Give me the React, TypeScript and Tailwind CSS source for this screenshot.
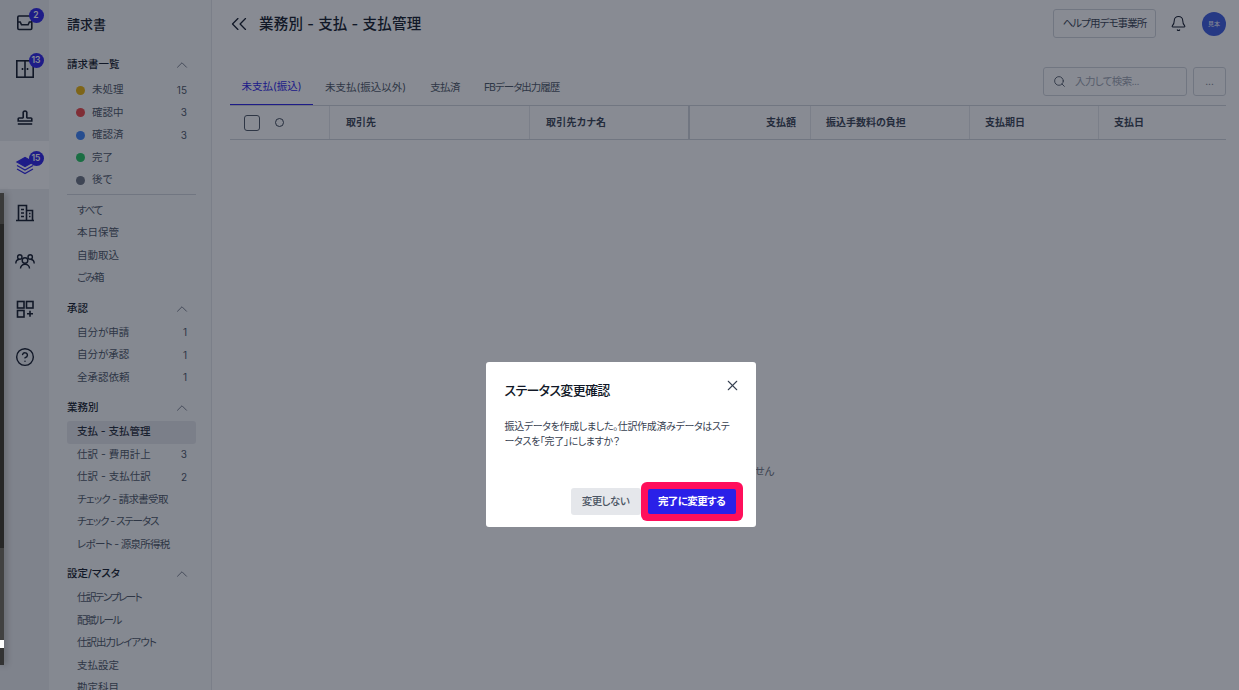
import { Bell, ChevronUp, ChevronsLeft, CircleHelp, Search, X } from "lucide-react";
import type { ReactNode } from "react";

const font = "font-['Inter','Noto_Sans_CJK_JP',sans-serif] [font-feature-settings:'palt']";

type Row = { label: string; count?: number; dot?: string; active?: boolean; tight?: string };

const sections: { title?: string; divider?: boolean; rows: Row[] }[] = [
  {
    title: "請求書一覧",
    rows: [
      { label: "未処理", count: 15, dot: "bg-[#eab308]" },
      { label: "確認中", count: 3, dot: "bg-[#ef4444]" },
      { label: "確認済", count: 3, dot: "bg-[#3b82f6]" },
      { label: "完了", dot: "bg-[#22c55e]" },
      { label: "後で", dot: "bg-[#6b7280]" },
    ],
  },
  {
    divider: true,
    rows: [
      { label: "すべて", tight: "tracking-[-1.2px]" },
      { label: "本日保管" },
      { label: "自動取込" },
      { label: "ごみ箱", tight: "tracking-[-1.2px]" },
    ],
  },
  {
    title: "承認",
    rows: [
      { label: "自分が申請", count: 1 },
      { label: "自分が承認", count: 1 },
      { label: "全承認依頼", count: 1 },
    ],
  },
  {
    title: "業務別",
    rows: [
      { label: "支払 - 支払管理", active: true },
      { label: "仕訳 - 費用計上", count: 3 },
      { label: "仕訳 - 支払仕訳", count: 2 },
      { label: "チェック - 請求書受取", tight: "tracking-[-0.7px]" },
      { label: "チェック - ステータス", tight: "tracking-[-1.1px]" },
      { label: "レポート - 源泉所得税", tight: "tracking-[-0.7px]" },
    ],
  },
  {
    title: "設定/マスタ",
    rows: [
      { label: "仕訳テンプレート", tight: "tracking-[-1.6px]" },
      { label: "配賦ルール", tight: "tracking-[-1.4px]" },
      { label: "仕訳出力レイアウト", tight: "tracking-[-1px]" },
      { label: "支払設定" },
      { label: "勘定科目" },
    ],
  },
];

function Badge({ n, top = "top-[-5px]" }: { n: number; top?: string }) {
  return (
    <span className={`absolute left-[14px] flex h-[15px] w-[15px] items-center justify-center rounded-full bg-[#2a20e8] text-[8.5px] font-semibold text-white ${top}`}>
      {n}
    </span>
  );
}

function RailItem({ children, badge, badgeTop, active, h = "h-12" }: { children: ReactNode; badge?: number; badgeTop?: string; active?: boolean; h?: string }) {
  return (
    <div className={`flex w-full items-center justify-center ${h} ${active ? "bg-white" : ""}`}>
      <div className="relative h-[20px] w-[20px] text-[#111827]">
        {children}
        {badge ? <Badge n={badge} top={badgeTop} /> : null}
      </div>
    </div>
  );
}

const iconProps = { viewBox: "0 0 20 20", fill: "none", stroke: "currentColor", strokeWidth: 1.6, className: "h-5 w-5" };

function Rail() {
  return (
    <div className="flex h-full w-[49px] shrink-0 flex-col bg-[#eceef1]">
      <RailItem badge={2} h="h-[45px]">
        <svg {...iconProps}>
          <rect x="2.800" y="3" width="14" height="13.500" rx="1.200" />
          <path d="M2.800 9h2.400l1.300 2.800h6.600L14.400 9h2.400" />
        </svg>
      </RailItem>
      <RailItem badge={13} badgeTop="top-[-6px]">
        <svg {...iconProps}>
          <rect x="1.800" y="1.800" width="16.400" height="16.400" />
          <path d="M10 1.800v16.400" />
          <path d="M7.500 9v2M12.500 9v2" />
        </svg>
      </RailItem>
      <RailItem>
        <svg {...iconProps}>
          <path d="M8.200 10.500V6.500a1.900 1.900 0 1 1 3.600 0v4l.5.500H16a.8.800 0 0 1 .8.800V14H3.200v-2.200A.8.800 0 0 1 4 11h3.700z" />
          <path d="M2.800 17h14.400" />
        </svg>
      </RailItem>
      <RailItem badge={15} badgeTop="top-[-4px]" active>
        <svg viewBox="0 0 20 20" fill="none" stroke="#2a20e8" strokeWidth={1.300} className="h-5 w-5">
          <path d="M10 2.500 2 7l8 4.500L18 7z" fill="#2a20e8" />
          <path d="M2 10.500 10 15l8-4.500M2 14l8 4.500 8-4.500" />
        </svg>
      </RailItem>
      <RailItem>
        <svg {...iconProps}>
          <path d="M3.500 17.500V2.500h8v15M11.500 7.500h6v10M1 17.500h18" />
          <path d="M6 6.500h3M6 10h3M6 13.500h3M14 10.500h1.500M14 13.500h1.500" />
        </svg>
      </RailItem>
      <RailItem>
        <svg {...iconProps} strokeWidth={1.400}>
          <circle cx="10" cy="9.500" r="2.800" />
          <path d="M5.500 17.500c0-2.500 2-4.300 4.500-4.300s4.500 1.800 4.500 4.300" />
          <circle cx="4.800" cy="6" r="2.200" />
          <circle cx="15.200" cy="6" r="2.200" />
          <path d="M.8 12.500c0-2.300 1.500-4 3.500-4.300M19.200 12.500c0-2.300-1.500-4-3.500-4.300" />
        </svg>
      </RailItem>
      <RailItem>
        <svg {...iconProps}>
          <rect x="2.500" y="2.500" width="6.500" height="6.500" />
          <rect x="11.500" y="2.500" width="6.500" height="6.500" />
          <rect x="2.500" y="11.500" width="6.500" height="6.500" />
          <path d="M15 11.800v6M12 14.800h6" />
        </svg>
      </RailItem>
      <RailItem>
        <CircleHelp size={20} strokeWidth={1.700} />
      </RailItem>
    </div>
  );
}

function SideRow({ row }: { row: Row }) {
  return (
    <div
      className={`flex h-[22.5px] items-center justify-between rounded-[3px] pl-[10px] pr-[9px] text-[10.5px] ${
        row.active ? "bg-[#e5e7eb] font-medium text-[#1f2937]" : "text-[#4b5563]"
      }`}
    >
      <span className={`flex items-center gap-[7px] ${row.tight ?? ""}`}>
        {row.dot ? <span className={`ml-[-1px] h-[9px] w-[9px] rounded-full ${row.dot}`} /> : null}
        {row.label}
      </span>
      {row.count ? <span className="text-[10px]">{row.count}</span> : null}
    </div>
  );
}

function sectionGap(i: number, divider?: boolean) {
  if (divider) return "mt-[2px] border-t border-[#d1d5db] pt-[5px]";
  if (i === 0) return "";
  return i === sections.length - 1 ? "mt-[7px]" : "mt-[8px]";
}

function SubNav() {
  return (
    <div className="flex h-full w-[163px] shrink-0 flex-col overflow-hidden border-r border-[#e5e7eb] bg-[#f9fafb] pl-[18px] pr-[15px]">
      <div className="pt-[15px] text-[13px] font-medium leading-[18px] text-[#111827]">請求書</div>
      <div className="mt-[21px] flex flex-col">
        {sections.map((s, i) => (
          <div key={i} className={sectionGap(i, s.divider)}>
            {s.title ? (
              <div className="flex h-[22px] items-center justify-between pr-[5px] text-[10.5px] font-medium text-[#111827]">
                {s.title}
                <ChevronUp size={18} strokeWidth={1.200} className="text-[#6b7280]" />
              </div>
            ) : null}
            <div className={s.title ? (i === 0 ? "mt-[3px]" : "mt-[2px]") : ""}>
              {s.rows.map((r) => (
                <SideRow key={r.label} row={r} />
              ))}
            </div>
          </div>
        ))}
      </div>
    </div>
  );
}

function Main() {
  return (
    <div className="flex min-w-0 flex-1 flex-col pl-[18px] pr-[13px]">
      <div className="flex h-[47px] items-center justify-between">
        <div className="flex items-center gap-[7px] text-[14.5px] font-medium tracking-[0.2px] text-[#111827]">
          <ChevronsLeft size={26} strokeWidth={1.200} className="ml-[-4px]" />
          <span>業務別 - 支払 - 支払管理</span>
        </div>
        <div className="flex items-center">
          <div className="flex h-[29px] w-[103px] items-center justify-center rounded-[3px] border border-[#d1d5db] text-[10.5px] tracking-[-0.9px] text-[#374151]">
            ヘルプ用デモ事業所
          </div>
          <Bell size={17} strokeWidth={1.500} className="ml-[14px] text-[#111827]" />
          <div className="ml-[15px] flex h-6 w-6 items-center justify-center rounded-full bg-[#3a5ae0] text-[6px] text-white">
            見本
          </div>
        </div>
      </div>
      <div className="mt-[20px] flex h-[38px] items-end justify-between">
        <div className="flex text-[10.5px] text-[#4b5563]">
          <div className="flex h-[38px] w-[83px] items-center justify-center border-b border-[#2a20e8] pt-[3px] text-[#2a20e8]">未支払(振込)</div>
          <div className="flex h-[38px] items-center pl-[12px] pr-[24px] pt-[3px]">未支払(振込以外)</div>
          <div className="flex h-[38px] items-center pr-[24px] pt-[3px] tracking-[-0.6px]">支払済</div>
          <div className="flex h-[38px] items-center pt-[3px] tracking-[-1px]">FBデータ出力履歴</div>
        </div>
        <div className="mb-[9px] flex gap-[6px]">
          <div className="flex h-[29px] w-[144px] items-center gap-[9px] rounded-[3px] border border-[#d1d5db] px-[9px] text-[10.5px] tracking-[-0.6px] text-[#9ca3af]">
            <Search size={13} strokeWidth={1.500} className="text-[#374151]" />
            入力して検索...
          </div>
          <div className="flex h-[29px] w-[33px] items-center justify-center rounded-[3px] border border-[#d1d5db] text-[10px] text-[#6b7280]">...</div>
        </div>
      </div>
      <div className="flex h-[35px] items-stretch border-y border-[#d1d5db] text-[10px] font-semibold text-[#374151]">
        <div className="flex w-[100px] items-center gap-[15px] border-r border-[#e5e7eb] pl-[14px]">
          <span className="h-4 w-4 rounded-[3px] border border-[#4b5563]" />
          <span className="h-[9px] w-[9px] rounded-full border border-[#374151]" />
        </div>
        <div className="flex w-[200px] items-center border-r border-[#e5e7eb] pl-[16px]">取引先</div>
        <div className="flex w-[159px] items-center border-r border-[#d1d5db] pl-[16px] tracking-[0.3px]">取引先カナ名</div>
        <div className="flex w-[122px] items-center justify-end border-r border-l border-l-[#d1d5db] border-r-[#e5e7eb] pr-[14px]">支払額</div>
        <div className="flex w-[159px] items-center border-r border-[#e5e7eb] pl-[15px]">振込手数料の負担</div>
        <div className="flex w-[129px] items-center border-r border-[#e5e7eb] pl-[15px]">支払期日</div>
        <div className="flex flex-1 items-center pl-[15px]">支払日</div>
      </div>
      <div className="flex flex-1 justify-center pl-[5px] pt-[324px] text-[10.5px] text-[#6b7280]">データがありません</div>
    </div>
  );
}

function Modal() {
  return (
    <div className="fixed inset-0 flex justify-center bg-[#111827]/50 pl-[2px] pt-[362px]">
      <div className="flex h-[165px] w-[270px] flex-col rounded-[3px] bg-white px-[19px] pt-[18px]">
        <div className="flex items-start justify-between">
          <div className="text-[13px] font-medium leading-[20px] tracking-[-0.7px] text-[#111827]">ステータス変更確認</div>
          <X size={17} strokeWidth={1.500} className="mr-[-4px] mt-[-3px] text-[#374151]" />
        </div>
        <p className="mt-[19px] max-w-[232px] text-[10px] leading-[14.5px] tracking-[-0.35px] text-[#374151]">
          振込データを作成しました。仕訳作成済みデータはステータスを「完了」にしますか？
        </p>
        <div className="mb-[6px] mr-[-6px] mt-auto flex items-center justify-end">
          <div className="flex h-[27px] w-[70px] items-center justify-center rounded-[3px] bg-[#e5e7eb] text-[10.5px] font-medium tracking-[-0.5px] text-[#4b5563]">変更しない</div>
          <div className="rounded-[6px] bg-[#ff0f5b] p-[7px]">
            <div className="flex h-[25px] w-[88px] items-center justify-center rounded-[2px] bg-[#2a20e8] text-[10.5px] font-semibold tracking-[-0.6px] text-white">完了に変更する</div>
          </div>
        </div>
      </div>
    </div>
  );
}

// sliver of another window along the left edge
function EdgeStrip() {
  return (
    <div className="absolute left-0 top-[193px] flex h-[472px] w-[4px] flex-col shadow-[2px_0_6px_rgba(0,0,0,0.3)]">
      <div className="h-[31px] bg-[#3a3a3a]" />
      <div className="h-[324px] bg-[#262626]" />
      <div className="h-[92px] bg-[#414141]" />
      <div className="h-[8px] bg-white" />
      <div className="flex-1 bg-[#333333]" />
    </div>
  );
}

export default function App() {
  return (
    <div className={`relative flex h-[690px] w-full overflow-hidden bg-white ${font}`}>
      <Rail />
      <SubNav />
      <Main />
      <Modal />
      <EdgeStrip />
    </div>
  );
}
